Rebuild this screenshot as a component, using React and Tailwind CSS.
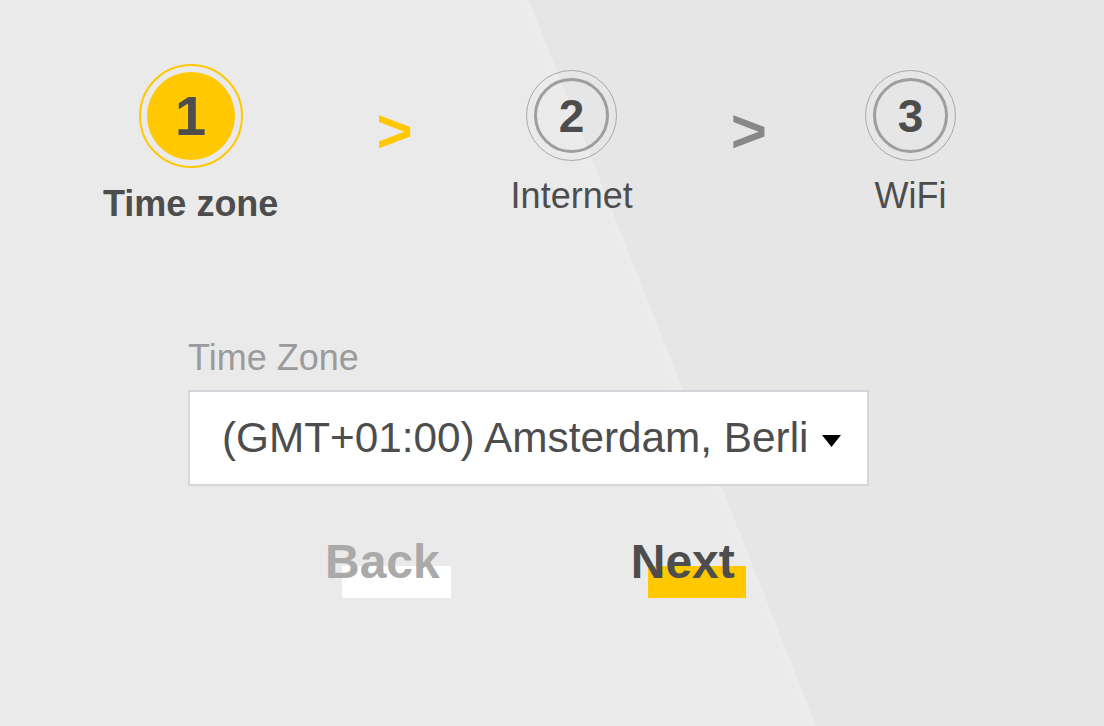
export default function App() {
  return (
    <div className="h-[726px] w-full overflow-hidden bg-[linear-gradient(68.4deg,#eaeaea_57%,#ececec_58.6%,#e6e6e6_58.7%)] font-['Liberation_Sans',Arial,sans-serif] text-[#4d4d4d]">
      {/* stepper */}
      <div className="flex items-start gap-[98px] pl-[103px] pt-[64px]">
        <div className="flex flex-col items-center">
          <div className="flex h-[104px] w-[104px] items-center justify-center rounded-full border-2 border-[#ffc800]">
            <div className="flex h-[88px] w-[88px] items-center justify-center rounded-full bg-[#ffc800] text-[56px] font-bold leading-none">
              1
            </div>
          </div>
          <div className="mt-[16px] text-[36px] font-bold leading-[40px]">Time zone</div>
        </div>

        <div className="mt-[36px] text-[62px] font-bold leading-none text-[#ffc800]">&gt;</div>

        <div className="flex flex-col items-center">
          <div className="mt-[6px] flex h-[91px] w-[91px] items-center justify-center rounded-full border border-[#a8a8a8]">
            <div className="flex h-[75px] w-[75px] items-center justify-center rounded-full border-[3px] border-[#9e9e9e] text-[46px] font-bold leading-none">
              2
            </div>
          </div>
          <div className="mt-[15px] text-[36px] leading-[40px]">Internet</div>
        </div>

        <div className="mt-[36px] text-[62px] font-bold leading-none text-[#888888]">&gt;</div>

        <div className="flex flex-col items-center">
          <div className="mt-[6px] flex h-[91px] w-[91px] items-center justify-center rounded-full border border-[#a8a8a8]">
            <div className="flex h-[75px] w-[75px] items-center justify-center rounded-full border-[3px] border-[#9e9e9e] text-[46px] font-bold leading-none">
              3
            </div>
          </div>
          <div className="mt-[15px] text-[36px] leading-[40px]">WiFi</div>
        </div>
      </div>

      {/* form */}
      <div className="ml-[188px] mt-[114px] w-[681px]">
        <div className="text-[36px] leading-[40px] text-[#9b9b9b]">Time Zone</div>
        <div className="mt-[12px] flex h-[96px] items-center border-2 border-[#d3d6da] bg-white pl-[32px] pr-[26px]">
          <span className="flex-1 whitespace-nowrap text-[42.3px] leading-none">
            (GMT+01:00) Amsterdam, Berli
          </span>
          <svg width="19" height="12" viewBox="0 0 19 12" className="mt-[6px]">
            <polygon points="0,0 19,0 9.5,12" fill="#000" />
          </svg>
        </div>

        <div className="mt-[52px] flex items-start">
          <button className="relative ml-[137px] text-[48px] font-bold leading-none text-[#aaaaaa]">
            <span className="absolute -right-[11px] left-[17px] top-[28px] h-[32px] bg-white" />
            <span className="relative">Back</span>
          </button>
          <button className="relative ml-[191px] text-[48px] font-bold leading-none text-[#4d4d4d]">
            <span className="absolute -right-[11px] left-[17px] top-[28px] h-[32px] bg-[#ffc800]" />
            <span className="relative">Next</span>
          </button>
        </div>
      </div>
    </div>
  );
}
